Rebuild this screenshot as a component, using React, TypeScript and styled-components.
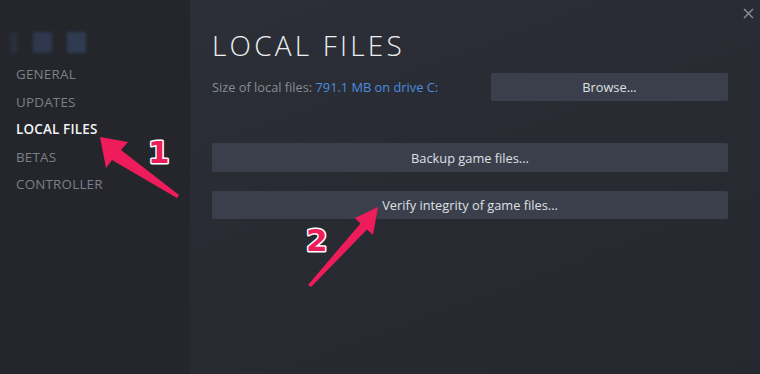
import React from "react";
import styled, { createGlobalStyle } from "styled-components";

const Global = createGlobalStyle`
  html, body { margin: 0; padding: 0; background: #24272d; }
  body { font-family: "Open Sans", "Noto Sans", "Liberation Sans", sans-serif; }
  * { box-sizing: border-box; }
`;

const Window = styled.div`
  position: relative;
  width: 760px;
  height: 374px;
  display: grid;
  grid-template-columns: 190px 1fr;
  overflow: hidden;
`;

const Sidebar = styled.aside`
  background: #24262c;
  padding: 32px 0 0 0;
  display: flex;
  flex-direction: column;
`;

const IconRow = styled.div`
  display: flex;
  gap: 15px;
  padding-left: 10px;
  height: 21px;
`;

const Blob = styled.div<{ $w: number; $o: number }>`
  width: ${(p) => p.$w}px;
  height: 21px;
  background: #34405a;
  opacity: ${(p) => p.$o};
  filter: blur(1.5px);
  border-radius: 2px;
`;

const Nav = styled.nav`
  margin-top: 8px;
  display: flex;
  flex-direction: column;
`;

const NavItem = styled.div<{ $active?: boolean }>`
  height: 27.5px;
  line-height: 27.5px;
  padding-left: 16px;
  font-size: 13.4px;
  letter-spacing: 0.2px;
  text-transform: uppercase;
  color: ${(p) => (p.$active ? "#f2f3f5" : "#7b8089")};
  font-weight: ${(p) => (p.$active ? 600 : 500)};
`;

const Main = styled.main`
  background: linear-gradient(160deg, #2c2f37 0%, #282b32 45%, #25282e 100%);
  padding: 26px 32px 0 22px;
  display: flex;
  flex-direction: column;
`;

const Title = styled.h1`
  margin: 0;
  font-size: 28px;
  font-weight: 300;
  letter-spacing: 3.2px;
  color: #eceef0;
  line-height: 38px;
`;

const SizeRow = styled.div`
  margin-top: 9px;
  display: flex;
  align-items: center;
  justify-content: space-between;
`;

const SizeText = styled.div`
  font-size: 12.8px;
  color: #868c95;
`;

const Accent = styled.span`
  color: #4b8de0;
`;

const Button = styled.div<{ $w?: number; $h?: number }>`
  width: ${(p) => (p.$w ? `${p.$w}px` : "100%")};
  height: ${(p) => p.$h ?? 28}px;
  background: #3b3f4b;
  color: #dde0e4;
  font-size: 12.8px;
  display: flex;
  align-items: center;
  justify-content: center;
  border-radius: 2px;
`;

const Actions = styled.div`
  margin-top: 42px;
  display: flex;
  flex-direction: column;
  gap: 19px;
`;

const Close = styled.div`
  position: absolute;
  top: 2px;
  right: 6px;
  width: 11px;
  height: 11px;
`;

const Overlay = styled.svg`
  position: absolute;
  inset: 0;
  pointer-events: none;
`;

const PINK = "#ef1c5c";

const Num = ({ x, y, children }: { x: number; y: number; children: string }) => (
  <text
    x={x}
    y={y}
    fontFamily="'DejaVu Sans', 'Liberation Sans', sans-serif"
    fontWeight="bold"
    fontSize="31"
    fill={PINK}
    stroke="#ffffff"
    strokeWidth="3"
    paintOrder="stroke"
    strokeLinejoin="round"
  >
    {children}
  </text>
);

export default function App() {
  return (
    <>
      <Global />
      <Window>
        <Sidebar>
          <IconRow>
            <Blob $w={8} $o={0.35} />
            <Blob $w={19} $o={0.7} />
            <Blob $w={19} $o={0.8} />
          </IconRow>
          <Nav>
            <NavItem>General</NavItem>
            <NavItem>Updates</NavItem>
            <NavItem $active>Local Files</NavItem>
            <NavItem>Betas</NavItem>
            <NavItem>Controller</NavItem>
          </Nav>
        </Sidebar>
        <Main>
          <Title>LOCAL FILES</Title>
          <SizeRow>
            <SizeText>
              Size of local files: <Accent>791.1 MB on drive C:</Accent>
            </SizeText>
            <Button $w={237} $h={28}>Browse...</Button>
          </SizeRow>
          <Actions>
            <Button $h={29}>Backup game files...</Button>
            <Button $h={28}>Verify integrity of game files...</Button>
          </Actions>
        </Main>
        <Close>
          <svg width="11" height="11" viewBox="0 0 11 11">
            <path d="M1 1 L10 10 M10 1 L1 10" stroke="#8b9099" strokeWidth="1.4" />
          </svg>
        </Close>
        <Overlay width="760" height="374" viewBox="0 0 760 374">
          <polygon
            points="100,137 128,142 121,150 179,195 177,198 112,160 106,168"
            fill={PINK}
          />
          <polygon
            points="378,207 373,235 367,229.5 311,287 308,285 360.5,223.5 355,218"
            fill={PINK}
          />
          <Num x={148} y={163}>1</Num>
          <Num x={306} y={251}>2</Num>
        </Overlay>
      </Window>
    </>
  );
}
